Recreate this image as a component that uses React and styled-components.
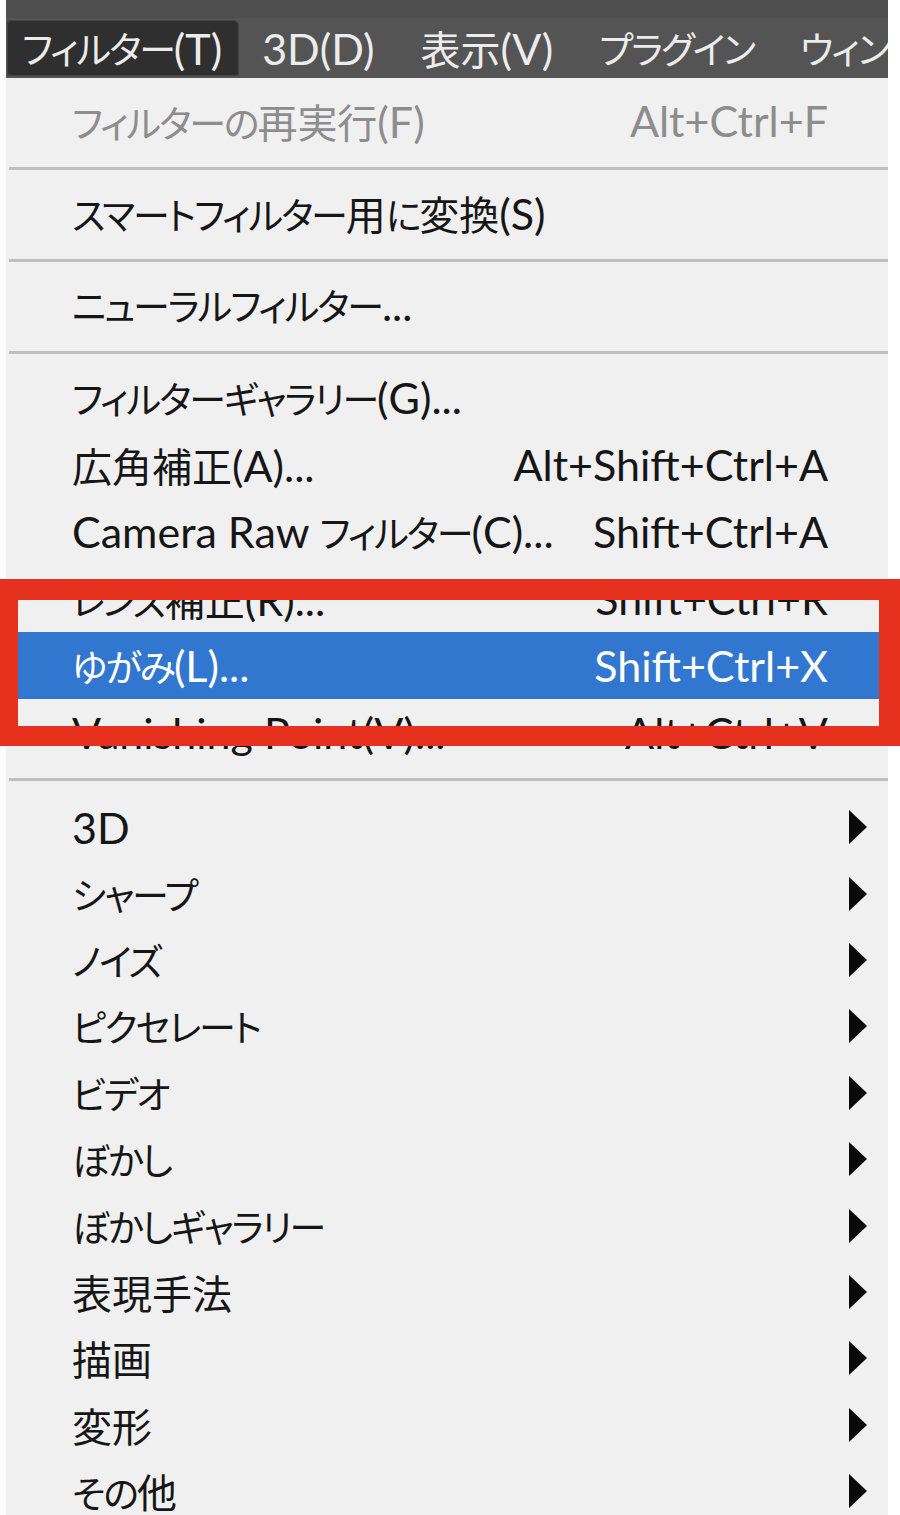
import styled, { createGlobalStyle } from "styled-components";

const GlobalStyle = createGlobalStyle`
    html, body {
        margin: 0;
        padding: 0;
        background: #ffffff;
    }
`

const Page = styled.div`
    position: relative;
    width: 900px;
    height: 1515px;
    overflow: hidden;
    background: #ffffff;
    font-family: Lato, "Noto Sans CJK JP", sans-serif;
    font-feature-settings: "palt";
`
const Panel = styled.div`
    margin-left: 6px;
    width: 882px;
    height: 100%;
    overflow: hidden;
    background: #f0f0f0;
    display: flex;
    flex-direction: column;
    & > * {
        flex-shrink: 0;
    }
`
const MenuBar = styled.div`
    height: 78px;
    box-sizing: border-box;
    padding-top: 20px;
    background: linear-gradient(#4e4e4e 0, #4e4e4e 18px, #545454 18px);
    display: flex;
    align-items: stretch;
    overflow: hidden;
    white-space: nowrap;
`
const BarItem = styled.div`
    display: flex;
    align-items: center;
    flex-shrink: 0;
    padding: ${props => props.active ? '0 17px 0 15px' : '0 23px'};
    margin-left: ${props => props.active ? '1px' : '0'};
    margin-bottom: 2px;
    font-size: 43px;
    color: #ececec;
    background: ${props => props.active ? '#2f2f2f' : 'transparent'};
    border-radius: ${props => props.active ? '4px 6px 3px 3px' : '0'};
    box-shadow: ${props => props.active ? 'inset 0 0 0 1px #464646' : 'none'};
`
const Section = styled.div`
    padding: ${props => props.pad};
    display: flex;
    flex-direction: column;
`
const Separator = styled.div`
    height: 3px;
    margin-left: 3px;
    background: #bfbfbf;
`
const Item = styled.div`
    display: flex;
    align-items: center;
    height: ${props => props.h || 67}px;
    padding: 0 20px 0 66px;
    font-size: 43px;
    white-space: nowrap;
    color: ${props => props.disabled ? '#8d8d8d' : props.selected ? '#ffffff' : '#161616'};
    background: ${props => props.selected ? '#3277cf' : 'transparent'};
`
const Label = styled.span`
    flex: 1;
`
const Kana = styled.span`
    font-size: 0.86em;
    letter-spacing: -0.055em;
`
const Kanji = styled.span`
    font-size: 0.93em;
`
const Shortcut = styled.span`
    margin-right: 40px;
`
const Arrow = styled.svg`
    width: 20px;
    height: 34px;
    flex: none;
`
const Callout = styled.div`
    position: absolute;
    left: 0;
    top: 579px;
    width: 900px;
    height: 167px;
    box-sizing: border-box;
    border-style: solid;
    border-color: #e6311f;
    border-width: 21px 21px 20px 18px;
    pointer-events: none;
`

const RUNS = /([\u3400-\u9fff]+|[\u3000-\u30ff\uff00-\uffef]+)/
const KANJI = /[\u3400-\u9fff]/
const KANA = /[\u3000-\u30ff\uff00-\uffef]/
const Mixed = ({ text }) => (
    <>
        {text.split(RUNS).filter(Boolean).map((run, i) => {
            if (KANJI.test(run)) return <Kanji key={i}>{run}</Kanji>
            if (KANA.test(run)) return <Kana key={i}>{run}</Kana>
            return <span key={i}>{run}</span>
        })}
    </>
)

const SubArrow = () => (
    <Arrow viewBox="0 0 20 34">
        <polygon points="1,0 19,17 1,34" fill="#0a0a0a" />
    </Arrow>
)

const barItems = ['3D(D)', '表示(V)', 'プラグイン', 'ウィンドウ']

const filterItems = [
    { label: 'フィルターギャラリー(G)...' },
    { label: '広角補正(A)...', key: 'Alt+Shift+Ctrl+A' },
    { label: 'Camera Raw フィルター(C)...', key: 'Shift+Ctrl+A' },
    { label: 'レンズ補正(R)...', key: 'Shift+Ctrl+R' },
    { label: 'ゆがみ(L)...', key: 'Shift+Ctrl+X', selected: true },
    { label: 'Vanishing Point(V)...', key: 'Alt+Ctrl+V' },
]

const subMenus = [
    '3D', 'シャープ', 'ノイズ', 'ピクセレート', 'ビデオ', 'ぼかし',
    'ぼかしギャラリー', '表現手法', '描画', '変形', 'その他',
]

const App = () => {
    return (
        <>
            <GlobalStyle />
            <Page>
                <Panel>
                    <MenuBar>
                        <BarItem active><Mixed text="フィルター(T)" /></BarItem>
                        {barItems.map(name => (
                            <BarItem key={name}><Mixed text={name} /></BarItem>
                        ))}
                    </MenuBar>

                    <Section pad="9px 0 13px">
                        <Item disabled>
                            <Label><Mixed text="フィルターの再実行(F)" /></Label>
                            <Shortcut>Alt+Ctrl+F</Shortcut>
                        </Item>
                    </Section>
                    <Separator />
                    <Section pad="9px 0 13px">
                        <Item><Label><Mixed text="スマートフィルター用に変換(S)" /></Label></Item>
                    </Section>
                    <Separator />
                    <Section pad="9px 0 13px">
                        <Item><Label><Mixed text="ニューラルフィルター..." /></Label></Item>
                    </Section>
                    <Separator />
                    <Section pad="10px 0 12px">
                        {filterItems.map(item => (
                            <Item key={item.label} selected={item.selected}>
                                <Label><Mixed text={item.label} /></Label>
                                {item.key && <Shortcut>{item.key}</Shortcut>}
                            </Item>
                        ))}
                    </Section>
                    <Separator />
                    <Section pad="13px 0 0">
                        {subMenus.map(name => (
                            <Item key={name} h={66.4}>
                                <Label><Mixed text={name} /></Label>
                                <SubArrow />
                            </Item>
                        ))}
                    </Section>
                </Panel>
                <Callout />
            </Page>
        </>
    )
}

export default App
